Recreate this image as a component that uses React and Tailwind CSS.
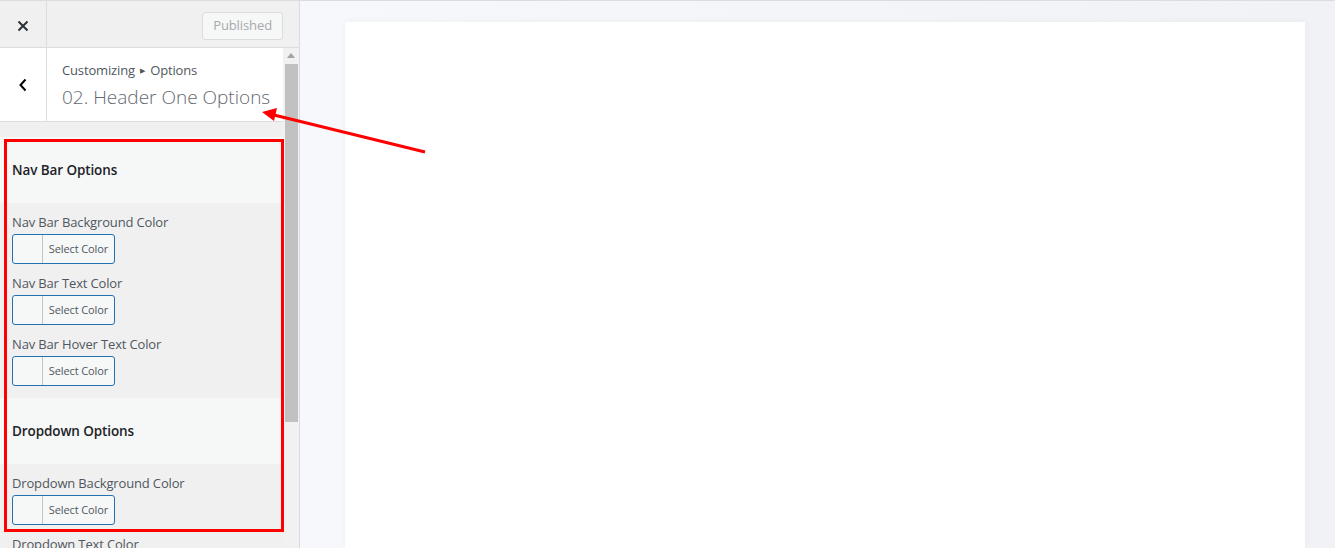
import React from "react";

const font = { fontFamily: '"Open Sans", "Noto Sans", sans-serif' };

const ColorControl = ({ label }) => (
  <div className="mb-[10px]">
    <div className="text-[13px] leading-[18px] tracking-[-0.15px] text-[#50575e] mb-[3px]">{label}</div>
    <button className="flex h-[30px] w-[103px] items-stretch rounded-[3px] border border-[#2271b1] bg-[#f6f7f7]">
      <span className="w-[30px] border-r border-[#c3c4c7]" />
      <span className="flex-1 flex items-center justify-center text-[11px] tracking-[-0.1px] text-[#50575e]">
        Select Color
      </span>
    </button>
  </div>
);

const SectionHeading = ({ title }) => (
  <div className="h-[66px] bg-[#f6f7f7] flex items-center px-[12px] pt-[1px]">
    <h3 className="text-[13.5px] font-semibold tracking-[-0.1px] text-[#1d2327]">{title}</h3>
  </div>
);

export default function App() {
  return (
    <div
      className="relative flex h-[548px] w-full overflow-hidden border-t border-[#dcdcde]"
      style={font}
    >
      {/* sidebar */}
      <div className="flex w-[300px] shrink-0 flex-col border-r border-[#dcdcde] bg-[#f0f0f1]">
        <div className="flex h-[47px] shrink-0 border-b border-[#dcdcde]">
          <div className="flex w-[47px] items-center justify-center border-r border-[#dcdcde] pt-[3px]">
            <svg width="12" height="12" viewBox="0 0 12 12">
              <path d="M1.5 1.5l9 9M10.5 1.5l-9 9" stroke="#2c3338" strokeWidth="2" />
            </svg>
          </div>
          <div className="flex flex-1 items-center justify-end pr-[16px] pt-[4px]">
            <button className="h-[28px] rounded-[3px] border border-[#dcdcde] bg-[#f6f7f7] px-[10px] text-[13px] tracking-[-0.1px] text-[#a7aaad]">
              Published
            </button>
          </div>
        </div>

        <div className="flex flex-1 min-h-0">
          <div className="flex-1 min-w-0">
            <div className="flex h-[74px] border-b border-[#dcdcde] bg-white">
              <div className="flex w-[47px] items-center justify-center border-r border-[#dcdcde]">
                <svg width="10" height="14" viewBox="0 0 10 14">
                  <path d="M7.5 1.5L2.5 7l5 5.5" fill="none" stroke="#000" strokeWidth="2" />
                </svg>
              </div>
              <div className="flex flex-col justify-center pl-[15px]">
                <div className="text-[13px] leading-[18px] tracking-[-0.15px] text-[#50575e]">
                  Customizing <span className="text-[7px] align-[2px] mx-[2px]">▶</span> Options
                </div>
                <div className="mt-[5px] text-[19px] leading-[24px] font-light text-[#646970]">
                  02. Header One Options
                </div>
              </div>
            </div>

            <div className="pt-[15px]">
              <SectionHeading title="Nav Bar Options" />
              <div className="px-[12px] pt-[10px] pb-[2px]">
                <ColorControl label="Nav Bar Background Color" />
                <ColorControl label="Nav Bar Text Color" />
                <ColorControl label="Nav Bar Hover Text Color" />
              </div>
              <SectionHeading title="Dropdown Options" />
              <div className="px-[12px] pt-[10px]">
                <ColorControl label="Dropdown Background Color" />
                <ColorControl label="Dropdown Text Color" />
              </div>
            </div>
          </div>

          {/* scrollbar */}
          <div className="flex w-[16px] shrink-0 flex-col items-center bg-[#f1f1f1]">
            <svg className="mt-[5px]" width="8" height="5" viewBox="0 0 8 5">
              <path d="M4 0L8 5H0z" fill="#a3a3a3" />
            </svg>
            <div className="mt-[6px] h-[358px] w-[13px] bg-[#c1c1c1]" />
          </div>
        </div>
      </div>

      {/* preview */}
      <div className="flex-1 bg-gradient-to-r from-[#f7f8fc] to-[#f1f2f6] pl-[45px] pr-[30px] pt-[21px]">
        <div className="h-full bg-white shadow-[0_0_8px_rgba(0,0,0,0.04)]" />
      </div>

      {/* annotations */}
      <div className="pointer-events-none absolute left-[4px] top-[138px] h-[393px] w-[280px] border-[3px] border-[#ff0000]" />
      <svg className="pointer-events-none absolute left-0 top-0" width="1335" height="548">
        <line x1="425" y1="151" x2="274" y2="114" stroke="#ff0000" strokeWidth="3" />
        <path d="M262 111L277 107L274 120z" fill="#ff0000" />
      </svg>
    </div>
  );
}
